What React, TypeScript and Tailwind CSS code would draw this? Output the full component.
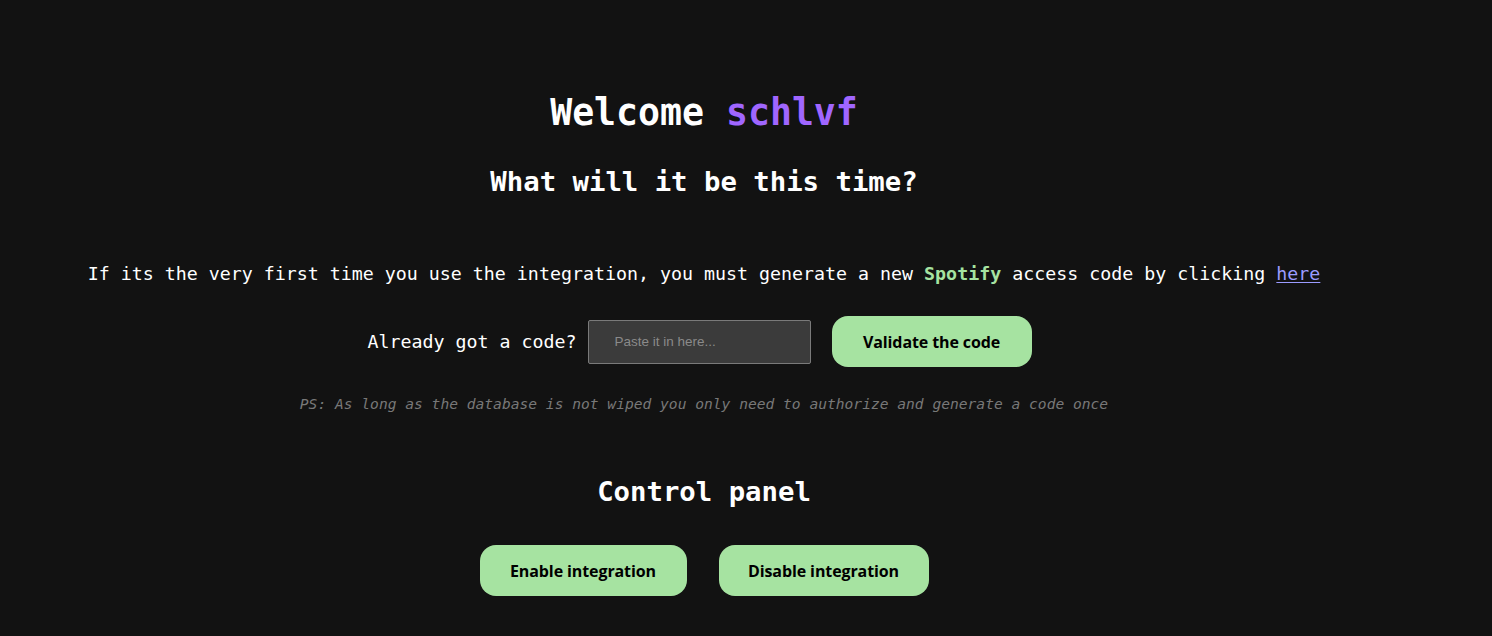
import React, { useState } from "react";

const mono = "font-['Consolas','DejaVu_Sans_Mono',monospace]";
const btn = "h-[51px] rounded-[16px] bg-[#a6e3a1] text-black text-[16px] font-bold font-['Open_Sans',sans-serif] tracking-[-0.1px]";

export default function App() {
    const [code, setCode] = useState("");
    const [enabled, setEnabled] = useState(false);

    return (
        <div className={`min-h-screen w-full bg-[#121212] text-white ${mono}`}>
            <div className="w-[1408px] flex flex-col items-center pt-[91px] pb-10">
                {/* Greeting */}
                <h1 className="text-[36.5px] leading-[44px] font-bold">
                    Welcome <span className="text-[#a066ff]">schlvf</span>
                </h1>
                <h2 className="mt-[30px] text-[27.3px] leading-[33px] font-bold">What will it be this time?</h2>

                <p className="mt-[65px] text-[18.3px] leading-[22px]">
                    If its the very first time you use the integration, you must generate a new{" "}
                    <span className="font-bold text-[#a6e3a1]">Spotify</span> access code by clicking{" "}
                    <a href="#" className="text-[#9b9bff] underline underline-offset-2">here</a>
                </p>

                {/* Code form */}
                <div className="mt-[31px] flex items-center pr-[9px]">
                    <span className="text-[18.3px] leading-[22px]">Already got a code?</span>
                    <input
                        value={code}
                        onChange={(e) => setCode(e.target.value)}
                        placeholder="Paste it in here..."
                        className="ml-[11px] w-[223px] h-[44px] bg-[#3b3b3b] border border-[#7a7a7a] rounded-[2px] pl-[26px] text-[13.5px] text-white placeholder:text-[#8a8a8a] font-['Liberation_Sans',Arial,sans-serif] outline-none"
                    />
                    <button className={`ml-[21px] w-[200px] ${btn}`}>Validate the code</button>
                </div>

                <p className="mt-[28px] text-[14.6px] leading-[18px] italic text-[#787878]">
                    PS: As long as the database is not wiped you only need to authorize and generate a code once
                </p>

                {/* Controls */}
                <h2 className="mt-[62px] text-[27.3px] leading-[33px] font-bold">Control panel</h2>
                <div className="mt-[37px] flex gap-[32px]">
                    <button onClick={() => setEnabled(true)} className={`w-[207px] ${btn}`}>
                        Enable integration
                    </button>
                    <button onClick={() => setEnabled(false)} className={`w-[210px] ${btn}`}>
                        Disable integration
                    </button>
                </div>
                <span className="hidden">{enabled ? "on" : "off"}</span>
            </div>
        </div>
    );
}
